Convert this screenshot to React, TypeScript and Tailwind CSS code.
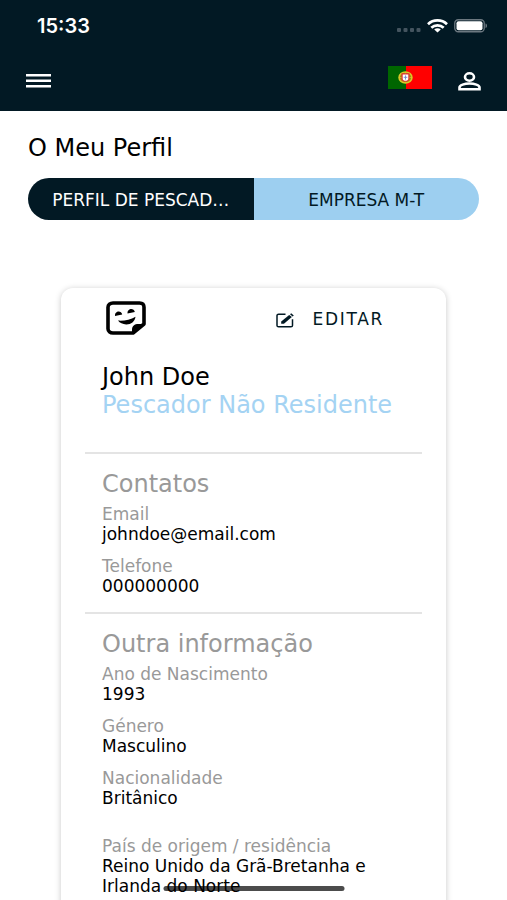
import React from 'react';

interface Field {
  label: string;
  value: string;
  spaced?: boolean;
}

const contacts: Field[] = [
  { label: 'Email', value: 'johndoe@email.com' },
  { label: 'Telefone', value: '000000000' },
];

const otherInfo: Field[] = [
  { label: 'Ano de Nascimento', value: '1993' },
  { label: 'Género', value: 'Masculino' },
  { label: 'Nacionalidade', value: 'Britânico' },
  { label: 'País de origem / residência', value: 'Reino Unido da Grã-Bretanha e Irlanda do Norte', spaced: true },
];

const StatusBar: React.FC = () => (
  <div className="flex h-[52px] items-center justify-between pl-[37px] pr-[19px]">
    <span className="font-['Inter',sans-serif] text-xl font-semibold">15:33</span>
    <div className="flex items-center gap-[6px]">
      <svg width="24" height="4" viewBox="0 0 24 4" className="mt-2" fill="#44545f">
        <rect x="0" width="4" height="4" rx="1" />
        <rect x="6.5" width="4" height="4" rx="1" />
        <rect x="13" width="4" height="4" rx="1" />
        <rect x="19.5" width="4" height="4" rx="1" />
      </svg>
      {/* Wifi */}
      <svg width="21" height="14" viewBox="0 0 21 14" fill="none" stroke="#fff" strokeWidth="2.7">
        <path d="M1 5.2C6.2 .1 14.8 .1 20 5.2" />
        <path d="M4.3 8.8c3.5-3.3 8.9-3.3 12.4 0" />
        <path d="M7.2 10.6c1.9-1.7 4.7-1.7 6.6 0L10.5 13.6z" fill="#fff" stroke="none" />
      </svg>
      {/* Battery */}
      <svg width="34" height="14" viewBox="0 0 34 14">
        <rect x=".75" y=".75" width="29.5" height="12" rx="3.5" fill="none" stroke="#6c7880" strokeWidth="1.3" />
        <rect x="2.5" y="2.3" width="26" height="9" rx="2" fill="#fff" />
        <path d="M31.5 4.5c2 .5 2 4 0 4.5z" fill="#6c7880" />
      </svg>
    </div>
  </div>
);

const PortugalFlag: React.FC = () => (
  <svg width="44" height="23" viewBox="0 0 44 23">
    <rect width="44" height="23" fill="#f00" />
    <rect width="18" height="23" fill="#060" />
    <ellipse cx="17.5" cy="11.5" rx="6.5" ry="5.5" fill="#a08a18" stroke="#d8c828" strokeWidth="1.5" />
    <path d="M11 11.5h13M17.5 6v11" stroke="#e8d020" strokeWidth=".6" />
    <path d="M13.5 7.3h8v5.5c0 4-8 4-8 0z" fill="#e03030" />
    <path d="M14.7 8.5h5.6v4.2c0 2.8-5.6 2.8-5.6 0z" fill="#fff" />
    <path d="M17.5 9.4v4.2M15.7 11.3h3.6" stroke="#7088c8" strokeWidth=".9" />
  </svg>
);

const StickerIcon: React.FC = () => (
  <svg width="40" height="34" viewBox="0 0 40 34">
    <path
      d="M7 2h26.5c2.8 0 4.5 1.7 4.5 4.2V23L27 32H7c-2.8 0-5-1.7-5-4.2V6.2C2 3.7 4.2 2 7 2z"
      fill="none"
      stroke="#000"
      strokeWidth="3.6"
      strokeLinejoin="round"
    />
    <path d="M26 32.5v-4c0-3.5 2.5-5.5 6.5-5.5H39z" />
    <path d="M9 15c-.6-5.2 6.4-6.2 7.2-1.4z" />
    <path d="M21.5 12.4c-.5-5.2 6.5-6.2 7.3-1.4z" />
    <path d="M12 19.6c6 .5 12.5-.9 17.5-3.8-.7 5-4.5 7.8-9.3 7.7-3.4-.1-6.4-1.4-8.2-3.9z" />
  </svg>
);

const EditIcon: React.FC = () => (
  <svg width="18" height="15" viewBox="0 0 18 15" fill="none" stroke="currentColor">
    <path
      d="M9.5 1.2H2.6c-.9 0-1.6.5-1.6 1.3v9.9c0 .8.7 1.3 1.6 1.3h12.3c.9 0 1.6-.5 1.6-1.3V6.2"
      strokeWidth="1.5"
    />
    <path d="M5.2 10.8V8.5L13.2 1.9l2.7 2.2-8 6.7z" fill="currentColor" stroke="none" />
    <path d="M14 1.3l1.2-1 2.6 2.2-1.2 1z" fill="currentColor" stroke="none" />
  </svg>
);

const Section: React.FC<{ title: string; fields: Field[] }> = ({ title, fields }) => (
  <section className="border-t-2 border-[#e4e4e4] px-[17px] pt-4 pb-1">
    <h3 className="mb-[6px] text-2xl leading-7 text-[#999]">{title}</h3>
    <dl>
      {fields.map((field) => (
        <div key={field.label} className={field.spaced ? 'mt-7 mb-3' : 'mb-3'}>
          <dt className="text-[17px] leading-5 text-[#999]">{field.label}</dt>
          <dd className="text-[17px] leading-5 text-black">{field.value}</dd>
        </div>
      ))}
    </dl>
  </section>
);

const App: React.FC = () => {
  return (
    <div className="flex h-screen flex-col overflow-hidden bg-white font-['DejaVu_Sans',sans-serif]">
      <header className="shrink-0 bg-[#021924] text-white">
        <StatusBar />
        <div className="flex h-[59px] items-center justify-between px-[26px]">
          <button type="button" aria-label="Menu">
            <svg width="25" height="16" viewBox="0 0 25 16" fill="#fff">
              <rect y="0" width="25" height="2.5" />
              <rect y="5.5" width="25" height="2.5" />
              <rect y="11" width="25" height="2.5" />
            </svg>
          </button>
          <div className="flex items-center gap-[26px]">
            <button type="button" aria-label="Português" className="mb-2">
              <PortugalFlag />
            </button>
            <button type="button" aria-label="Conta">
              <svg width="23" height="20" viewBox="0 0 23 20" fill="none" stroke="#fff" strokeWidth="2.6">
                <ellipse cx="11.5" cy="5" rx="4.5" ry="3.7" />
                <path d="M1.5 17.2v-1.7c0-2.4 5-4 10-4s10 1.6 10 4v1.7z" />
              </svg>
            </button>
          </div>
        </div>
      </header>

      <main className="flex-1 overflow-y-auto px-7 pt-[23px] [scrollbar-width:none]">
        <h1 className="text-2xl leading-7 text-black">O Meu Perfil</h1>

        <div className="mt-4 grid h-[42px] grid-cols-2 overflow-hidden rounded-full text-[17px]">
          <button type="button" className="truncate bg-[#021924] px-6 pt-[3px] text-white">
            PERFIL DE PESCAD…
          </button>
          <button type="button" className="truncate bg-[#9dcff0] px-6 pt-[3px] text-[#021924]">
            EMPRESA M-T
          </button>
        </div>

        <article className="mx-[33px] mt-[68px] rounded-xl bg-white px-6 pt-[13px] pb-16 shadow-[0_1px_6px_rgba(0,0,0,0.22)]">
          <div className="flex items-center justify-between pl-[21px] pr-[38px]">
            <StickerIcon />
            <button type="button" className="flex items-center gap-[18px] pt-1 text-[17px] tracking-widest text-[#021924]">
              <EditIcon />
              EDITAR
            </button>
          </div>

          <div className="px-[17px] pt-7 pb-[33px] text-2xl leading-7">
            <h2 className="text-black">John Doe</h2>
            <p className="text-[#a4d3f3]">Pescador Não Residente</p>
          </div>

          <Section title="Contatos" fields={contacts} />
          <Section title="Outra informação" fields={otherInfo} />
        </article>
      </main>

      {/* Home indicator */}
      <div className="fixed bottom-[9px] left-1/2 h-[5px] w-[181px] -translate-x-1/2 rounded-full bg-black/70" />
    </div>
  );
};

export default App;
